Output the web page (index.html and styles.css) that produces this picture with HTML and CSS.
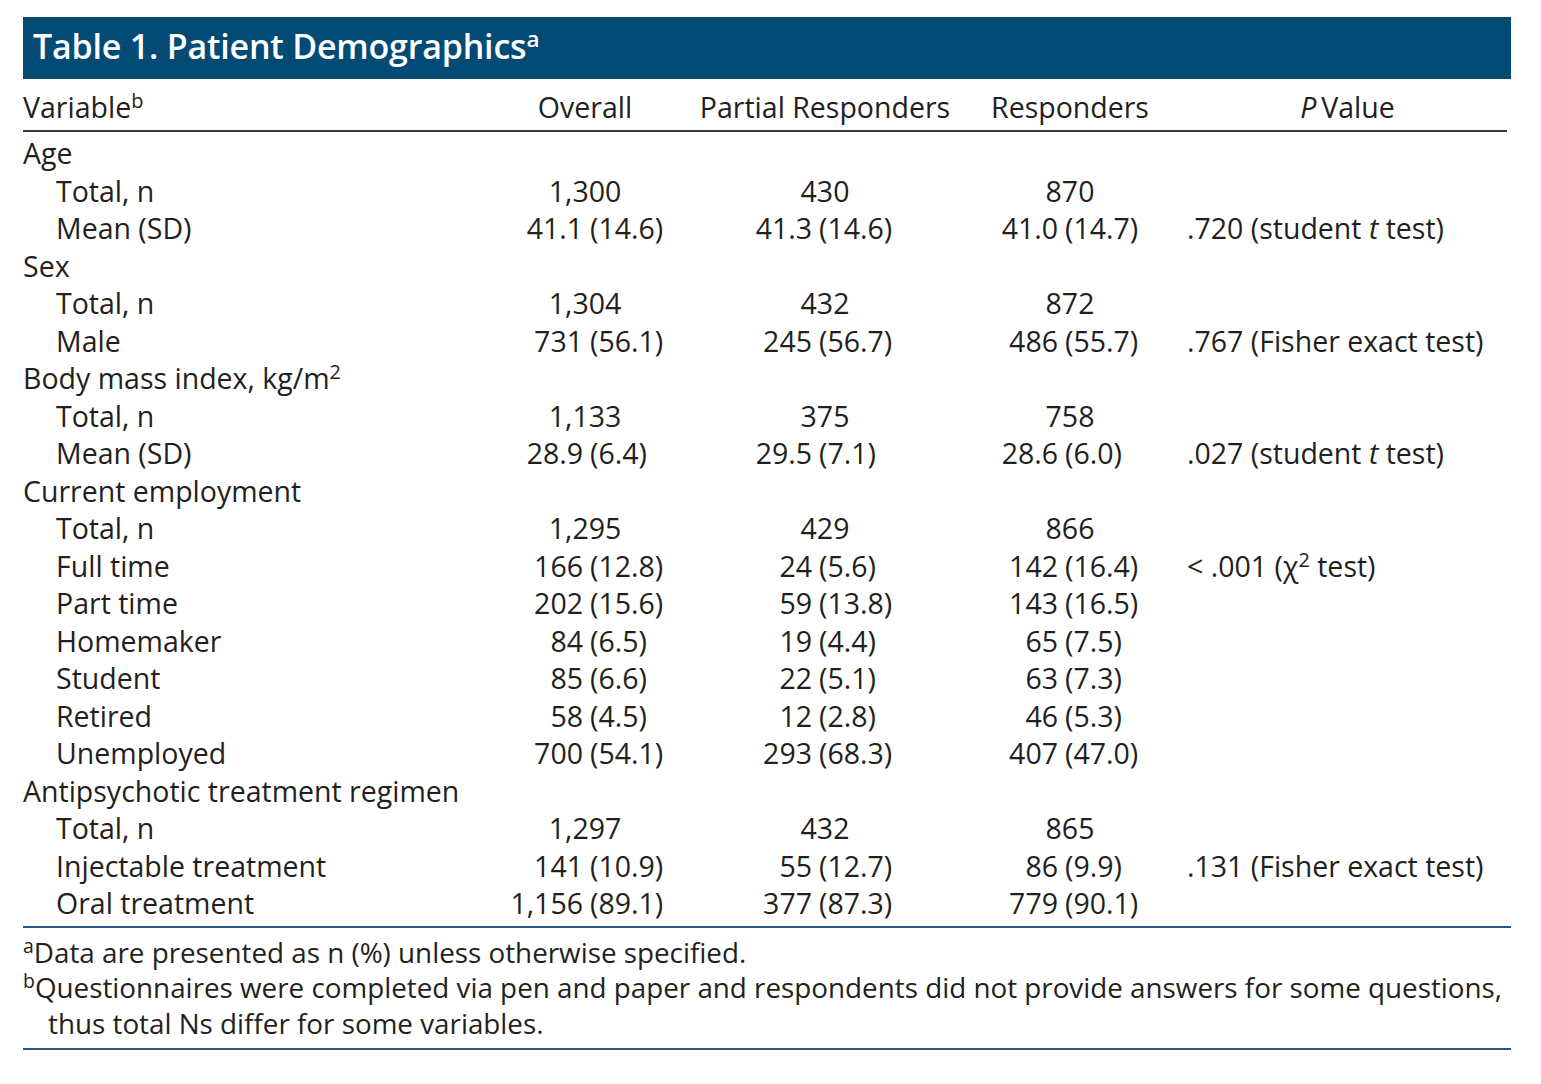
FILE: index.html
```html
<!DOCTYPE html>
<html lang="en">
<head>
<meta charset="utf-8">
<title>Table 1. Patient Demographics</title>
<link rel="stylesheet" href="styles.css">
</head>
<body>
<div class="wrap">
  <div class="title">Table 1. Patient Demographics<sup>a</sup></div>
  <table class="tbl">
    <colgroup>
      <col class="c-var"><col class="c-ov"><col class="c-pr"><col class="c-rs"><col class="c-p">
    </colgroup>
    <thead>
      <tr>
        <th class="h-var">Variable<sup>b</sup></th>
        <th class="h-num">Overall</th>
        <th class="h-num">Partial Responders</th>
        <th class="h-num">Responders</th>
        <th class="h-p"><i>P</i>&#8201;Value</th>
      </tr>
    </thead>
    <tbody>
      <tr class="first"><td class="grp">Age</td><td></td><td></td><td></td><td></td></tr>
      <tr><td class="sub">Total, n</td><td class="tot">1,300</td><td class="tot">430</td><td class="tot">870</td><td></td></tr>
      <tr><td class="sub">Mean (SD)</td>
        <td class="ov"><span class="l">41.1</span><span class="r">(14.6)</span></td>
        <td class="pr"><span class="l">41.3</span><span class="r">(14.6)</span></td>
        <td class="rs"><span class="l">41.0</span><span class="r">(14.7)</span></td>
        <td class="pv">.720 (student <i>t</i> test)</td></tr>
      <tr><td class="grp">Sex</td><td></td><td></td><td></td><td></td></tr>
      <tr><td class="sub">Total, n</td><td class="tot">1,304</td><td class="tot">432</td><td class="tot">872</td><td></td></tr>
      <tr><td class="sub">Male</td>
        <td class="ov"><span class="l">731</span><span class="r">(56.1)</span></td>
        <td class="pr"><span class="l">245</span><span class="r">(56.7)</span></td>
        <td class="rs"><span class="l">486</span><span class="r">(55.7)</span></td>
        <td class="pv">.767 (Fisher exact test)</td></tr>
      <tr><td class="grp">Body mass index, kg/m<sup>2</sup></td><td></td><td></td><td></td><td></td></tr>
      <tr><td class="sub">Total, n</td><td class="tot">1,133</td><td class="tot">375</td><td class="tot">758</td><td></td></tr>
      <tr><td class="sub">Mean (SD)</td>
        <td class="ov"><span class="l">28.9</span><span class="r">(6.4)</span></td>
        <td class="pr"><span class="l">29.5</span><span class="r">(7.1)</span></td>
        <td class="rs"><span class="l">28.6</span><span class="r">(6.0)</span></td>
        <td class="pv">.027 (student <i>t</i> test)</td></tr>
      <tr><td class="grp">Current employment</td><td></td><td></td><td></td><td></td></tr>
      <tr><td class="sub">Total, n</td><td class="tot">1,295</td><td class="tot">429</td><td class="tot">866</td><td></td></tr>
      <tr><td class="sub">Full time</td>
        <td class="ov"><span class="l">166</span><span class="r">(12.8)</span></td>
        <td class="pr"><span class="l">24</span><span class="r">(5.6)</span></td>
        <td class="rs"><span class="l">142</span><span class="r">(16.4)</span></td>
        <td class="pv">&lt; .001 (&#967;<sup>2</sup> test)</td></tr>
      <tr><td class="sub">Part time</td>
        <td class="ov"><span class="l">202</span><span class="r">(15.6)</span></td>
        <td class="pr"><span class="l">59</span><span class="r">(13.8)</span></td>
        <td class="rs"><span class="l">143</span><span class="r">(16.5)</span></td>
        <td></td></tr>
      <tr><td class="sub">Homemaker</td>
        <td class="ov"><span class="l">84</span><span class="r">(6.5)</span></td>
        <td class="pr"><span class="l">19</span><span class="r">(4.4)</span></td>
        <td class="rs"><span class="l">65</span><span class="r">(7.5)</span></td>
        <td></td></tr>
      <tr><td class="sub">Student</td>
        <td class="ov"><span class="l">85</span><span class="r">(6.6)</span></td>
        <td class="pr"><span class="l">22</span><span class="r">(5.1)</span></td>
        <td class="rs"><span class="l">63</span><span class="r">(7.3)</span></td>
        <td></td></tr>
      <tr><td class="sub">Retired</td>
        <td class="ov"><span class="l">58</span><span class="r">(4.5)</span></td>
        <td class="pr"><span class="l">12</span><span class="r">(2.8)</span></td>
        <td class="rs"><span class="l">46</span><span class="r">(5.3)</span></td>
        <td></td></tr>
      <tr><td class="sub">Unemployed</td>
        <td class="ov"><span class="l">700</span><span class="r">(54.1)</span></td>
        <td class="pr"><span class="l">293</span><span class="r">(68.3)</span></td>
        <td class="rs"><span class="l">407</span><span class="r">(47.0)</span></td>
        <td></td></tr>
      <tr><td class="grp">Antipsychotic treatment regimen</td><td></td><td></td><td></td><td></td></tr>
      <tr><td class="sub">Total, n</td><td class="tot">1,297</td><td class="tot">432</td><td class="tot">865</td><td></td></tr>
      <tr><td class="sub">Injectable treatment</td>
        <td class="ov"><span class="l">141</span><span class="r">(10.9)</span></td>
        <td class="pr"><span class="l">55</span><span class="r">(12.7)</span></td>
        <td class="rs"><span class="l">86</span><span class="r">(9.9)</span></td>
        <td class="pv">.131 (Fisher exact test)</td></tr>
      <tr><td class="sub">Oral treatment</td>
        <td class="ov"><span class="l">1,156</span><span class="r">(89.1)</span></td>
        <td class="pr"><span class="l">377</span><span class="r">(87.3)</span></td>
        <td class="rs"><span class="l">779</span><span class="r">(90.1)</span></td>
        <td></td></tr>
    </tbody>
  </table>
  <div class="notes">
    <p class="note"><sup>a</sup>Data are presented as n (%) unless otherwise specified.</p>
    <p class="note"><sup>b</sup>Questionnaires were completed via pen and paper and respondents did not provide answers for some questions,<br><span class="cont">thus total Ns differ for some variables.</span></p>
  </div>
</div>
</body>
</html>
```

FILE: styles.css
```css
* { box-sizing: border-box; }

html, body {
  margin: 0;
  padding: 0;
  background: #ffffff;
}

body {
  font-family: "Open Sans", "Noto Sans", "Liberation Sans", sans-serif;
  color: #231f20;
  font-size: 28.5px;
}

.wrap {
  width: 1488px;
  margin: 17px 0 0 23px;
}

sup {
  font-size: 0.7em;
  line-height: 0;
  vertical-align: 0.5em;
}

.title {
  height: 62px;
  background: #034a75;
  color: #ffffff;
  font-weight: 600;
  font-size: 34px;
  line-height: 58px;
  padding-left: 10px;
  letter-spacing: -0.2px;
}

.title sup {
  font-size: 0.66em;
  vertical-align: 0.55em;
}

.tbl {
  width: 1484px;
  border-collapse: collapse;
  border-spacing: 0;
  table-layout: fixed;
}

.c-var { width: 477px; }
.c-ov { width: 170px; }
.c-pr { width: 310px; }
.c-rs { width: 180px; }
.c-p { width: 347px; }

.tbl th {
  font-weight: 400;
  height: 52px;
  padding: 6px 0 0 0;
  line-height: 44px;
  border-bottom: 2px solid #3a3a3a;
  vertical-align: top;
  white-space: nowrap;
}

.h-var { text-align: left; }
.h-num { text-align: center; }
.h-p { text-align: center; padding-left: 28px !important; }

.tbl td {
  padding: 0;
  height: 37.5px;
  line-height: 37.5px;
  white-space: nowrap;
  vertical-align: middle;
}

.tbl tr.first td {
  padding-top: 3px;
  height: 40.5px;
}

.tbl tbody tr:last-child td {
  padding-bottom: 3px;
  height: 40.5px;
}

.tbl td.grp { text-align: left; }
.tbl td.sub { text-align: left; padding-left: 33px; }
.tbl td.tot { text-align: center; }

.l {
  display: inline-block;
  text-align: right;
}
.r {
  display: inline-block;
  padding-left: 7px;
}

.ov .l { width: 83px; }
.pr .l { width: 142px; }
.rs .l { width: 78px; }

.tbl td.pv {
  text-align: left;
  padding-left: 27px;
}

.notes {
  border-top: 2px solid #2b5886;
  border-bottom: 2px solid #2b5886;
  padding: 7px 0 7px 0;
}

.note {
  margin: 0;
  line-height: 35.5px;
  font-size: 27.8px;
  white-space: nowrap;
}

.cont {
  padding-left: 25px;
}
```
